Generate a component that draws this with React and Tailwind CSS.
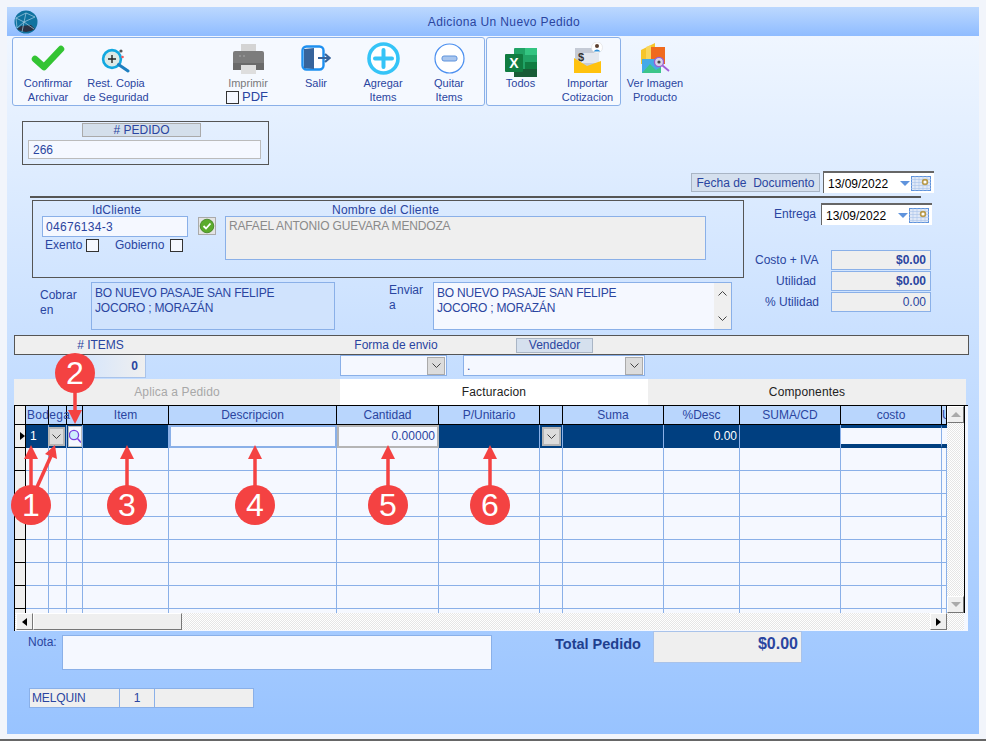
import React from "react";

const gridCols =
  "grid grid-cols-[11px_23px_18px_16px_86px_168px_102px_101px_23px_101px_76px_101px_101px_5px]";
const dither =
  "bg-[repeating-conic-gradient(#e6e6e6_0_25%,#ffffff_0_50%)] bg-[length:2px_2px]";
const raisedBtn =
  "bg-[#efefef] border border-t-white border-l-white border-r-[#777] border-b-[#777]";

const Chevron = ({ className = "" }) => (
  <svg width="9" height="5" viewBox="0 0 9 5" className={className}>
    <path d="M0.5 0.5 L4.5 4.5 L8.5 0.5" fill="none" stroke="#444" strokeWidth="1" />
  </svg>
);

const GlobeIcon = () => (
  <svg width="24" height="24" viewBox="0 0 24 24">
    <circle cx="12" cy="12" r="11.5" fill="#10729f" />
    <path d="M3 19 Q12 25 21 19 L17 15 L7 16 Z" fill="#2b3244" />
    <path d="M2 8 L12 3 L21 7 M2 8 L10 12 L21 7 M10 12 L8 22 M10 12 L20 19 M12 3 L10 12 M2 8 L3 18 L10 12" fill="none" stroke="#a8cfe4" strokeWidth="0.7" />
  </svg>
);

const CheckIcon = () => (
  <svg width="34" height="28" viewBox="0 0 34 28" className="mb-[4px]">
    <path d="M4 15 L13 23 L30 5" fill="none" stroke="#33c433" strokeWidth="6.5" strokeLinecap="round" strokeLinejoin="round" />
  </svg>
);

const SearchPlusIcon = () => (
  <svg width="30" height="25" viewBox="0 0 30 25" className="mb-[3px]">
    <circle cx="11" cy="11" r="8.9" fill="#dbe9e6" stroke="#12a8e0" strokeWidth="2.6" />
    <path d="M11 7 V15 M7 11 H15" stroke="#222" strokeWidth="1.4" />
    <path d="M17.5 16.5 L27 23" stroke="#1d7fc0" strokeWidth="3" strokeLinecap="round" />
    <circle cx="20" cy="3" r="1.6" fill="#555" />
    <circle cx="21.5" cy="9" r="1.3" fill="#f05a5a" />
  </svg>
);

const PrinterIcon = () => (
  <svg width="33" height="30" viewBox="0 0 33 30" className="mb-[2px]">
    <rect x="9" y="0" width="15" height="8" fill="#d4d4d4" />
    <path d="M3 7 H30 Q32 7 32 9 V26 H1 V9 Q1 7 3 7 Z" fill="#7c7c7c" />
    <rect x="1" y="19" width="31" height="7" fill="#6a6a6a" />
    <circle cx="8" cy="12" r="1" fill="#9a9a9a" />
    <circle cx="12" cy="12" r="1" fill="#9a9a9a" />
    <rect x="9" y="21" width="15" height="9" fill="#dedede" />
  </svg>
);

const ExitIcon = () => (
  <svg width="30" height="27" viewBox="0 0 30 27" className="mb-[4px]">
    <rect x="1.5" y="1.5" width="21" height="23" rx="4" fill="#fff" stroke="#1e90f0" strokeWidth="2.4" />
    <path d="M3 4 L13 3 V24 L3 23 Z" fill="#37649b" />
    <path d="M17 13 H27 M24 9 L28.5 13 L24 17" fill="none" stroke="#37649b" strokeWidth="2.2" />
  </svg>
);

const PlusCircleIcon = () => (
  <svg width="33" height="33" viewBox="0 0 33 33" className="mb-[1px]">
    <circle cx="16.5" cy="16.5" r="14.5" fill="#fff" stroke="#35c4f7" strokeWidth="3.6" />
    <path d="M16.5 8 V25 M8 16.5 H25" stroke="#35c4f7" strokeWidth="4" strokeLinecap="round" />
  </svg>
);

const MinusCircleIcon = () => (
  <svg width="31" height="31" viewBox="0 0 31 31" className="mb-[2px]">
    <circle cx="15.5" cy="15.5" r="14.5" fill="#fff" stroke="#4a8ff0" strokeWidth="1.2" />
    <rect x="8" y="13" width="15" height="5" rx="2" fill="#a9c6ee" stroke="#5f93dc" strokeWidth="1" />
  </svg>
);

const ExcelIcon = () => (
  <svg width="32" height="30" viewBox="0 0 32 30" className="mb-[-1px]">
    <rect x="9" y="1" width="23" height="29" rx="1" fill="#21a366" />
    <rect x="20" y="1" width="12" height="7" fill="#33c481" />
    <rect x="20" y="15" width="12" height="7" fill="#107c41" />
    <rect x="9" y="22" width="23" height="8" fill="#185c37" />
    <rect x="0" y="7" width="18" height="18" rx="1" fill="#107c41" />
    <text x="9" y="21" textAnchor="middle" fontFamily="Liberation Sans, sans-serif" fontWeight="700" fontSize="14" fill="#fff">X</text>
  </svg>
);

const ImportIcon = () => (
  <svg width="30" height="32" viewBox="0 0 30 32" className="mb-[2px]">
    <rect x="2" y="6" width="24" height="19" fill="#c5cbd6" />
    <rect x="7" y="11" width="19" height="10" fill="#e3e7ee" />
    <text x="8" y="19" textAnchor="middle" fontFamily="Liberation Sans, sans-serif" fontWeight="700" fontSize="11" fill="#333">$</text>
    <path d="M1 16 L14 24 L28 19 V31 H1 Z" fill="#ffc20e" />
    <circle cx="24" cy="5.5" r="5.5" fill="#fff" stroke="#ddd" strokeWidth="0.6" />
    <circle cx="24" cy="4" r="2" fill="#5b4030" />
    <path d="M20.5 9.5 Q24 5.5 27.5 9.5 Z" fill="#2f8fd8" />
  </svg>
);

const ImageIcon = () => (
  <svg width="30" height="31" viewBox="0 0 30 31" className="mb-[3px]">
    <path d="M1 8 L15 1 V22 H1 Z" fill="#f6c52a" />
    <path d="M7 5 L25 5 V22 H7 Z" fill="#f06a1d" />
    <path d="M6 5 L11 3 V22 H6 Z" fill="#f9d65c" />
    <rect x="2" y="17" width="19" height="14" fill="#44a9e8" />
    <path d="M2 31 L10 22 L16 28 L21 25 V31 Z" fill="#3cc58a" />
    <circle cx="19" cy="20" r="4.6" fill="#d8d3ea" stroke="#9a5fd0" strokeWidth="1.4" />
    <circle cx="19" cy="20" r="1.6" fill="#444" />
    <path d="M22.5 23.5 L29 29" stroke="#a05fd8" strokeWidth="1.8" />
  </svg>
);

const OkIcon = () => (
  <svg width="18" height="18" viewBox="0 0 18 18">
    <rect x="0.5" y="0.5" width="17" height="17" fill="#e4e4e4" stroke="#aaa" />
    <circle cx="9" cy="9" r="6.8" fill="#5bab2c" stroke="#3b7f1d" strokeWidth="0.8" />
    <path d="M5.5 9 L8 11.5 L12.5 6.5" fill="none" stroke="#fff" strokeWidth="1.8" />
  </svg>
);

const CalendarIcon = () => (
  <svg width="20" height="15" viewBox="0 0 20 15">
    <rect x="0.5" y="0.5" width="19" height="14" fill="#dfe8f7" stroke="#5f93dc" />
    <path d="M0 3.5 H20 M0 6.5 H20 M0 9.5 H20 M0 12.5 H20 M4 0 V15 M8 0 V15 M12 0 V15 M16 0 V15" stroke="#a9c3ea" strokeWidth="0.6" />
    <circle cx="14" cy="6" r="2.4" fill="#fff" stroke="#b89a4a" strokeWidth="1.6" />
  </svg>
);

const DateBox = ({ value, className = "" }) => (
  <div className={`flex items-center h-[22px] w-[111px] bg-white border-t-2 border-l border-t-[#666] border-l-[#666] ${className}`}>
    <span className="w-[71px] pl-[4px] pt-[2px] text-[12px] text-black leading-none">{value}</span>
    <span className="ml-[5px] w-0 h-0 border-x-[5px] border-x-transparent border-t-[5px] border-t-[#5f93dc]" />
    <span className="ml-[1px]"><CalendarIcon /></span>
  </div>
);

const ToolButton = ({ icon, lines, className = "w-[68px]" }) => (
  <div className={`flex flex-col items-center shrink-0 ${className}`}>
    <div className="h-[38px] flex items-end justify-center">{icon}</div>
    {lines.map((line) => (
      <span key={line} className="text-[11px] leading-[14px] whitespace-nowrap text-[#2a45a0]">
        {line}
      </span>
    ))}
  </div>
);

const CheckBox = () => (
  <span className="inline-block w-[13px] h-[13px] bg-[#f5f8ff] border border-[#333]" />
);

const ComboBox = ({ text, className }) => (
  <div className={`flex items-center justify-between h-[21px] bg-[#f5f8ff] border border-[#8ab0e8] pl-[3px] pr-[1px] text-[12px] text-[#2a45a0] ${className}`}>
    <span>{text}</span>
    <span className="w-[18px] h-[18px] flex items-center justify-center bg-[#dcdcdc] border border-[#aaa]"><Chevron /></span>
  </div>
);

const headers = ["", "Bodega", "", "", "Item", "Descripcion", "Cantidad", "P/Unitario", "", "Suma", "%Desc", "SUMA/CD", "costo", "U"];

const GridHeader = () => (
  <div className={`${gridCols} h-[19px]`}>
    {headers.map((h, i) => (
      <div
        key={i}
        className={`border-r border-b border-black text-[12px] leading-[18px] whitespace-nowrap text-[#2a45a0] ${
          i === 0 ? "bg-[#efefef]" : "bg-[#b9d6fd]"
        } ${i === 1 ? "pl-[1px] overflow-visible relative z-10 tracking-[0.3px]" : "text-center overflow-hidden"}`}
      >
        {h}
      </div>
    ))}
  </div>
);

const ActiveRow = () => {
  const navy = "bg-[#003f80] border-r border-[#8ab0e8]";
  return (
    <div className={`${gridCols} h-[23px]`}>
      <div className="bg-[#efefef] border-r border-b border-black flex items-center justify-end">
        <span className="w-0 h-0 border-y-[4px] border-y-transparent border-l-[5px] border-l-black" />
      </div>
      <div className={`${navy} pl-[4px] text-white text-[12px] leading-[23px]`}>1</div>
      <div className={`${navy} flex items-center`}>
        <span className="-ml-[1px] w-[17px] h-[19px] flex items-center justify-center bg-[#dcdcdc] border-2 border-[#b5b5b5]"><Chevron /></span>
      </div>
      <div className={`${navy} flex items-center justify-center`}>
        <span className="w-[14px] h-[21px] bg-[#f5f8ff] border border-[#bbb] flex items-center justify-start overflow-hidden">
          <svg width="13" height="16" viewBox="0 0 13 16" className="shrink-0">
            <circle cx="5" cy="6" r="4.6" fill="#cdeefc" stroke="#7a3fe0" strokeWidth="1.3" />
            <path d="M8.5 9.5 L12 13.5" stroke="#7a3fe0" strokeWidth="1.5" />
          </svg>
        </span>
      </div>
      <div className={navy} />
      <div className="bg-[#f5f8ff] border-2 border-[#8ab0e8]" />
      <div className="bg-[#f5f8ff] border-2 border-[#b5b5b5] text-right pr-[2px] text-[12px] leading-[19px] text-[#2a45a0]">0.00000</div>
      <div className={navy} />
      <div className={`${navy} flex items-center justify-center`}>
        <span className="w-[19px] h-[19px] flex items-center justify-center bg-[#dcdcdc] border-2 border-[#b5b5b5]"><Chevron /></span>
      </div>
      <div className={navy} />
      <div className={`${navy} text-right pr-[2px] text-white text-[12px] leading-[23px]`}>0.00</div>
      <div className={navy} />
      <div className="bg-[#f5f8ff] border-t-[3px] border-b-[4px] border-r border-[#003f80] border-r-[#8ab0e8]" />
      <div className="bg-[#f5f8ff] border-t-[3px] border-b-[4px] border-[#003f80]" />
    </div>
  );
};

const EmptyRow = () => (
  <div className={`${gridCols} h-[23px]`}>
    {headers.map((_, i) => (
      <div
        key={i}
        className={i === 0 ? "bg-[#efefef] border-r border-b border-black" : "bg-[#f5f8ff] border-r border-b border-[#8ab0e8]"}
      />
    ))}
  </div>
);

const Badge = ({ n, className }) => (
  <div className={`absolute w-[40px] h-[40px] rounded-full bg-[#f44242] text-white text-[32px] leading-[40px] text-center ${className}`}>
    {n}
  </div>
);

const Annotations = () => (
  <>
    <svg className="absolute left-0 top-0 pointer-events-none" width="986" height="741" viewBox="0 0 986 741">
      <g stroke="#f44242" strokeWidth="3.5" fill="#f44242">
        <path d="M31 490 V458" />
        <path d="M24 459 L31 445 L38 459 Z" strokeWidth="0" />
        <path d="M37 487 L51 456" />
        <path d="M45 454 L55 445 L57 459 Z" strokeWidth="0" />
        <path d="M75 388 V411" />
        <path d="M68 410 L75 424 L82 410 Z" strokeWidth="0" />
        <path d="M127 490 V458" />
        <path d="M120 459 L127 445 L134 459 Z" strokeWidth="0" />
        <path d="M255 490 V458" />
        <path d="M248 459 L255 445 L262 459 Z" strokeWidth="0" />
        <path d="M388 490 V458" />
        <path d="M381 459 L388 445 L395 459 Z" strokeWidth="0" />
        <path d="M490 490 V458" />
        <path d="M483 459 L490 445 L497 459 Z" strokeWidth="0" />
      </g>
    </svg>
    <Badge n="1" className="left-[11px] top-[485px]" />
    <Badge n="2" className="left-[55px] top-[353px]" />
    <Badge n="3" className="left-[107px] top-[485px]" />
    <Badge n="4" className="left-[235px] top-[485px]" />
    <Badge n="5" className="left-[368px] top-[485px]" />
    <Badge n="6" className="left-[470px] top-[485px]" />
  </>
);

export default function App() {
  return (
    <div className="relative w-[986px] h-[741px] overflow-hidden bg-[#f2f5fb] pt-[7px] pl-[7px] border-b-2 border-[#666] font-['Liberation_Sans',sans-serif]">
      <div className="w-[972px] h-[727px] bg-gradient-to-b from-[#f3f8ff] to-[#98c3ff]">
        {/* barra de titulo */}
        <div className="relative flex justify-center h-[29px] bg-gradient-to-b from-[#bcd8fe] to-[#8fbcff]">
          <span className="absolute left-[7px] top-[3px]"><GlobeIcon /></span>
          <span className="ml-[22px] mt-[9px] text-[12px] leading-none tracking-[0.37px] text-[#2a45a0]">Adiciona Un Nuevo Pedido</span>
        </div>

        {/* toolbar */}
        <div className="flex items-start ml-[5px] mt-[1px]">
          <div className="flex w-[473px] h-[69px] pl-[1px] bg-[#f5f9ff] border border-[#8ab0e8] rounded-[3px]">
            <ToolButton icon={<CheckIcon />} lines={["Confirmar", "Archivar"]} />
            <ToolButton icon={<SearchPlusIcon />} lines={["Rest. Copia", "de Seguridad"]} />
            <div className="flex flex-col items-center w-[68px] ml-[64px] shrink-0">
              <div className="h-[38px] flex items-end justify-center"><PrinterIcon /></div>
              <span className="text-[11px] leading-[14px] text-[#7a7a7a]">Imprimir</span>
              <span className="flex items-center gap-[3px] -ml-[2px] text-[13px] leading-[14px] text-[#2a45a0]"><CheckBox />PDF</span>
            </div>
            <ToolButton icon={<ExitIcon />} lines={["Salir"]} />
            <ToolButton icon={<PlusCircleIcon />} lines={["Agregar", "Items"]} className="w-[66px]" />
            <ToolButton icon={<MinusCircleIcon />} lines={["Quitar", "Items"]} className="w-[66px]" />
          </div>
          <div className="flex w-[135px] h-[69px] ml-[1px] bg-[#f5f9ff] border border-[#8ab0e8] rounded-[3px]">
            <ToolButton icon={<ExcelIcon />} lines={["Todos"]} className="w-[67px]" />
            <ToolButton icon={<ImportIcon />} lines={["Importar", "Cotizacion"]} className="w-[67px]" />
          </div>
          <ToolButton icon={<ImageIcon />} lines={["Ver Imagen", "Producto"]} className="w-[68px] mt-[1px]" />
        </div>

        {/* pedido y fecha */}
        <div className="flex items-start mt-[15px] ml-[15px] h-[72px]">
          <div className="w-[247px] h-[44px] border border-[#555] pl-[5px] pt-[1px]">
            <div className="ml-[54px] w-[119px] h-[14px] bg-[#d4dfeb] border border-[#aaa] text-center text-[12px] leading-[13px] text-[#2a45a0]"># PEDIDO</div>
            <div className="mt-[3px] w-[233px] h-[19px] bg-[#f5f8ff] border border-[#bbb] pl-[4px] text-[12px] leading-[18px] text-[#2a45a0]">266</div>
          </div>
          <div className="ml-[422px] mt-[52px] w-[129px] h-[19px] bg-[#d5e0ee] border border-[#a9b5c5] text-center text-[12px] leading-[18px] whitespace-nowrap text-[#2a45a0]">Fecha de&nbsp; Documento</div>
          <DateBox value="13/09/2022" className="ml-[3px] mt-[50px]" />
        </div>
        <div className="ml-[23px] mt-[3px] w-[891px] h-[2px] bg-[#555]" />

        {/* cliente y totales */}
        <div className="flex items-start mt-[2px] ml-[25px] h-[130px]">
          <div className="w-[712px] shrink-0">
            <div className="flex w-[712px] h-[78px] border border-[#555] pl-[9px]">
              <div className="w-[146px]">
                <div className="h-[15px] pt-[3px] pl-[3px] text-center text-[12px] leading-[13px] tracking-[0.2px] text-[#2a45a0]">IdCliente</div>
                <div className="h-[21px] bg-[#f5f8ff] border border-[#8ab0e8] pl-[3px] text-[12px] leading-[20px] tracking-[0.3px] text-[#2a45a0]">04676134-3</div>
                <div className="flex items-center mt-[1px] ml-[3px] text-[12px] leading-[14px] text-[#2a45a0]">
                  <span className="w-[41px]">Exento</span>
                  <CheckBox />
                  <span className="ml-[16px] w-[55px]">Gobierno</span>
                  <CheckBox />
                </div>
              </div>
              <span className="ml-[10px] mt-[16px]"><OkIcon /></span>
              <div className="ml-[9px] w-[481px]">
                <div className="h-[15px] pt-[3px] pl-[107px] text-[12px] leading-[13px] tracking-[0.25px] text-[#2a45a0] whitespace-nowrap">Nombre del Cliente</div>
                <div className="h-[44px] bg-[#efefef] border border-[#8ab0e8] pl-[3px] text-[12px] leading-[19px] tracking-[-0.17px] text-[#8a8a8a] whitespace-nowrap">RAFAEL ANTONIO GUEVARA MENDOZA</div>
              </div>
            </div>
            <div className="flex items-start mt-[4px] text-[12px] leading-[15px] text-[#2a45a0]">
              <div className="ml-[8px] w-[51px] pt-[6px]">Cobrar<br />en</div>
              <div className="w-[244px] h-[48px] bg-[#d0e3fd] border border-[#8ab0e8] pl-[3px] pt-[3px] tracking-[-0.2px]">BO NUEVO PASAJE SAN FELIPE<br />JOCORO ; MORAZÁN</div>
              <div className="ml-[54px] w-[44px] pt-[1px]">Enviar<br />a</div>
              <div className="flex justify-between w-[299px] h-[48px] bg-[#f5f8ff] border border-[#8ab0e8] pl-[3px] pt-[3px] tracking-[-0.2px]">
                <span>BO NUEVO PASAJE SAN FELIPE<br />JOCORO ; MORAZÁN</span>
                <div className="-mt-[3px] w-[17px] h-[46px] bg-[#efefef] flex flex-col justify-between items-center py-[8px]">
                  <Chevron className="rotate-180" />
                  <Chevron />
                </div>
              </div>
            </div>
          </div>

          <div className="ml-[6px] text-[12px] leading-[14px] text-[#2a45a0]">
            <div className="flex items-center mt-[3px]">
              <span className="ml-[24px] w-[43px]">Entrega</span>
              <DateBox value="13/09/2022" className="ml-[4px]" />
            </div>
            <div className="flex items-center h-[20px] mt-[25px]">
              <span className="ml-[5px] w-[64px] whitespace-nowrap">Costo + IVA</span>
              <div className="ml-[12px] w-[100px] h-[20px] bg-[#efefef] border border-[#8ab0e8] text-right pr-[4px] font-bold leading-[18px]">$0.00</div>
            </div>
            <div className="flex items-center h-[20px] mt-[1px]">
              <span className="ml-[26px] w-[46px]">Utilidad</span>
              <div className="ml-[9px] w-[100px] h-[20px] bg-[#efefef] border border-[#8ab0e8] text-right pr-[4px] font-bold leading-[18px]">$0.00</div>
            </div>
            <div className="flex items-center h-[20px] mt-[1px]">
              <span className="ml-[15px] w-[58px] whitespace-nowrap">% Utilidad</span>
              <div className="ml-[8px] w-[100px] h-[20px] bg-[#efefef] border border-[#8ab0e8] text-right pr-[4px] leading-[18px]">0.00</div>
            </div>
          </div>
        </div>

        {/* barra items */}
        <div className="flex items-center ml-[7px] mt-[5px] w-[955px] h-[20px] bg-[#efefef] border border-[#555] text-[12px] text-[#2a45a0]">
          <span className="w-[171px] text-center"># ITEMS</span>
          <span className="ml-[150px] w-[120px] text-center">Forma de envio</span>
          <span className="ml-[60px] w-[77px] h-[15px] bg-[#d5e0ee] border border-[#a9b5c5] text-center leading-[13px]">Vendedor</span>
        </div>
        <div className="flex items-start ml-[73px] h-[24px]">
          <div className="w-[66px] h-[23px] bg-gradient-to-r from-[#d4e5fd] to-[#efefef] border-r border-b border-[#a9c3ea] text-right pr-[7px] text-[12px] font-bold leading-[22px] text-[#2a45a0]">0</div>
          <ComboBox text="" className="ml-[194px] w-[107px]" />
          <ComboBox text="." className="ml-[16px] w-[182px]" />
        </div>

        {/* tabs */}
        <div className="flex ml-[7px] h-[26px] text-[12px] text-center leading-[26px] tracking-[0.15px]">
          <div className="w-[326px] bg-[#efefef] text-[#a8a8a8]">Aplica a Pedido</div>
          <div className="w-[308px] bg-white text-[#222]">Facturacion</div>
          <div className="w-[318px] bg-[#efefef] text-[#222]">Componentes</div>
        </div>

        {/* grid */}
        <div className="ml-[7px] w-[954px] h-[226px] bg-[#f5f8ff] border-t border-l border-black">
          <div className="flex h-[207px]">
            <div className="w-[932px] h-[207px] overflow-hidden">
              <div className="w-[933px]">
                <GridHeader />
                <ActiveRow />
                {[1, 2, 3, 4, 5, 6, 7, 8].map((n) => (
                  <EmptyRow key={n} />
                ))}
              </div>
            </div>
            <div className={`w-[17px] flex flex-col justify-between ${dither}`}>
              <div className={`h-[17px] flex items-center justify-center ${raisedBtn}`}>
                <span className="w-0 h-0 border-x-[5px] border-x-transparent border-b-[5px] border-b-[#aaa]" />
              </div>
              <div className={`h-[17px] flex items-center justify-center ${raisedBtn}`}>
                <span className="w-0 h-0 border-x-[5px] border-x-transparent border-t-[5px] border-t-[#aaa]" />
              </div>
            </div>
            <div className="w-[1px] bg-black" />
          </div>
          <div className={`flex w-[949px] h-[17px] ${dither}`}>
            <div className={`ml-[1px] w-[17px] flex items-center justify-center ${raisedBtn}`}>
              <span className="w-0 h-0 border-y-[4px] border-y-transparent border-r-[5px] border-r-black" />
            </div>
            <div className={`w-[149px] ${raisedBtn}`} />
            <div className={`ml-[748px] w-[17px] flex items-center justify-center ${raisedBtn}`}>
              <span className="w-0 h-0 border-y-[4px] border-y-transparent border-l-[5px] border-l-black" />
            </div>
          </div>
        </div>

        {/* pie */}
        <div className="flex items-start h-[39px] ml-[21px] text-[#2a45a0]">
          <span className="w-[34px] mt-[4px] text-[12px] leading-[14px]">Nota:</span>
          <div className="mt-[4px] w-[430px] h-[35px] bg-[#f5f8ff] border border-[#8ab0e8]" />
          <span className="ml-[63px] w-[87px] mt-[5px] text-[14.5px] font-bold leading-[16px] text-[#1f3f8f] whitespace-nowrap">Total Pedido</span>
          <div className="ml-[11px] w-[149px] h-[32px] bg-[#efefef] border border-[#a9c3ea] text-right pr-[3px] pt-[3px] text-[16px] font-bold leading-[18px]">$0.00</div>
        </div>
        <div className="flex ml-[22px] mt-[18px] h-[20px] text-[12px] leading-[18px] text-[#2a45a0]">
          <div className="w-[91px] bg-[#efefef] border border-[#8ab0e8] pl-[2px] tracking-[-0.15px]">MELQUIN</div>
          <div className="w-[35px] bg-[#efefef] border-y border-r border-[#8ab0e8] text-center">1</div>
          <div className="w-[99px] bg-[#efefef] border-y border-r border-[#8ab0e8]" />
        </div>
      </div>
      <Annotations />
    </div>
  );
}
